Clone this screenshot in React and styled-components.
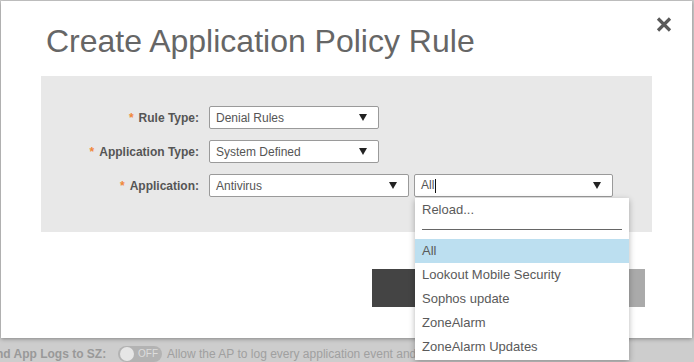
import React from 'react';
import styled, {createGlobalStyle} from "styled-components";

const GlobalSC = createGlobalStyle`
  body {
    margin: 0;
    background: #cdcdcd;
    font-family: "Liberation Sans", Arial, sans-serif;
    overflow: hidden;
  }
`

const PageSC = styled('div')`
  width: 694px;
  height: 362px;
  display: flex;
  flex-direction: column;
`

const ModalSC = styled('div')`
  position: relative;
  margin: 1px 2px 0 1px;
  height: 337px;
  background: #ffffff;
  box-shadow: rgba(0, 0, 0, 0.35) 0 1px 4px;
  padding: 22px 40px 0 40px;
  box-sizing: border-box;
  display: flex;
  flex-direction: column;
`

const HeaderSC = styled('div')`
  display: flex;
  justify-content: space-between;
  align-items: flex-start;
`

const TitleSC = styled('h1')`
  margin: 0 0 16px 5px;
  font-size: 32px;
  font-weight: normal;
  line-height: 37px;
  color: #666666;
`

const CloseSC = styled('div')`
  width: 16px;
  height: 17px;
  margin: -7px -20px 0 0;
`

const PanelSC = styled('div')`
  background: #e8e8e8;
  height: 156px;
  padding-top: 30px;
  box-sizing: border-box;
  display: flex;
  flex-direction: column;
  gap: 11px;
`

const RowSC = styled('div')`
  display: flex;
  align-items: center;
  gap: 10px;
  height: 23px;
`

const LabelSC = styled('label')`
  width: 158px;
  text-align: right;
  font-size: 12px;
  font-weight: bold;
  color: #555555;

  span {
    color: #f0873a;
    margin-right: 5px;
  }
`

const FieldSC = styled('div')`
  position: relative;
  display: flex;
  margin-left: -5px;
`

const SelectSC = styled('div')`
  width: ${p => p.$w}px;
  height: 23px;
  box-sizing: border-box;
  border: 1px solid #9a9a9a;
  border-radius: 2px;
  background: #ffffff;
  display: flex;
  align-items: center;
  justify-content: space-between;
  padding: 0 11px 0 6px;
  font-size: 12px;
  color: #555555;
`

const CaretSC = styled('i')`
  width: 0;
  height: 0;
  border-left: 4.5px solid transparent;
  border-right: 4.5px solid transparent;
  border-top: 7px solid #222222;
`

const CursorSC = styled('i')`
  display: inline-block;
  width: 1px;
  height: 14px;
  background: #111111;
  vertical-align: middle;
  margin-left: 1px;
`

const MenuSC = styled('div')`
  position: absolute;
  top: 24px;
  left: 1px;
  width: 214px;
  height: 162px;
  background: #ffffff;
  box-shadow: rgba(0, 0, 0, 0.3) 0 2px 6px;
  z-index: 2;
  font-size: 13px;
  color: #5a5a5a;
`

const ItemSC = styled('div')`
  height: 24px;
  line-height: 24px;
  padding-left: 7px;
  background: ${p => p.$active ? '#bcdff0' : 'transparent'};
`

const DividerSC = styled('div')`
  height: 17px;
  padding: 0 7px;
  display: flex;
  align-items: center;

  hr {
    flex: 1;
    margin: 0;
    border: none;
    border-top: 1px solid #666666;
    position: relative;
    top: -1px;
  }
`

const ButtonsSC = styled('div')`
  display: flex;
  justify-content: flex-end;
  gap: 5px;
  margin: 37px 7px 0 0;
`

const ButtonSC = styled('div')`
  width: 134px;
  height: 38px;
  background: ${p => p.$dark ? '#444444' : '#aaaaaa'};
`

const BgRowSC = styled('div')`
  display: flex;
  align-items: center;
  height: 24px;
  padding-top: 7px;
  box-sizing: border-box;
  margin-left: -4px;
  font-size: 12px;
  color: #a0a0a0;
  white-space: nowrap;
`

const BgLabelSC = styled('b')`
  width: 122px;
  flex-shrink: 0;
  color: #999999;
`

const ToggleSC = styled('div')`
  width: 44px;
  height: 16px;
  flex-shrink: 0;
  border-radius: 8px;
  background: #b3b3b3;
  display: flex;
  align-items: center;
  gap: 4px;
  padding-left: 2px;
  box-sizing: border-box;
  margin-right: 5px;
  font-size: 10px;
  color: #dddddd;

  &::before {
    content: '';
    width: 14px;
    height: 14px;
    border-radius: 50%;
    background: #e6e6e6;
  }
`

const items = ['Lookout Mobile Security', 'Sophos update', 'ZoneAlarm', 'ZoneAlarm Updates']

const App = () => {
    return (
        <PageSC>
            <GlobalSC/>
            <ModalSC>
                <HeaderSC>
                    <TitleSC>Create Application Policy Rule</TitleSC>
                    <CloseSC>
                        <svg width="16" height="17" viewBox="0 0 16 17">
                            <path d="M2 2.5 L14 14.5 M14 2.5 L2 14.5" stroke="#5a5a5a" strokeWidth="3.2"/>
                        </svg>
                    </CloseSC>
                </HeaderSC>
                <PanelSC>
                    <RowSC>
                        <LabelSC><span>*</span>Rule Type:</LabelSC>
                        <SelectSC $w={170}>Denial Rules<CaretSC/></SelectSC>
                    </RowSC>
                    <RowSC>
                        <LabelSC><span>*</span>Application Type:</LabelSC>
                        <SelectSC $w={170}>System Defined<CaretSC/></SelectSC>
                    </RowSC>
                    <RowSC>
                        <LabelSC><span>*</span>Application:</LabelSC>
                        <SelectSC $w={200}>Antivirus<CaretSC/></SelectSC>
                        <FieldSC>
                            <SelectSC $w={199}><span>All<CursorSC/></span><CaretSC/></SelectSC>
                            <MenuSC>
                                <ItemSC>Reload...</ItemSC>
                                <DividerSC><hr/></DividerSC>
                                <ItemSC $active>All</ItemSC>
                                {items.map(item => <ItemSC key={item}>{item}</ItemSC>)}
                            </MenuSC>
                        </FieldSC>
                    </RowSC>
                </PanelSC>
                <ButtonsSC>
                    <ButtonSC $dark/>
                    <ButtonSC/>
                </ButtonsSC>
            </ModalSC>
            <BgRowSC>
                <BgLabelSC>nd App Logs to SZ:</BgLabelSC>
                <ToggleSC>OFF</ToggleSC>
                Allow the AP to log every application event and
            </BgRowSC>
        </PageSC>
    );
}

export default App;
